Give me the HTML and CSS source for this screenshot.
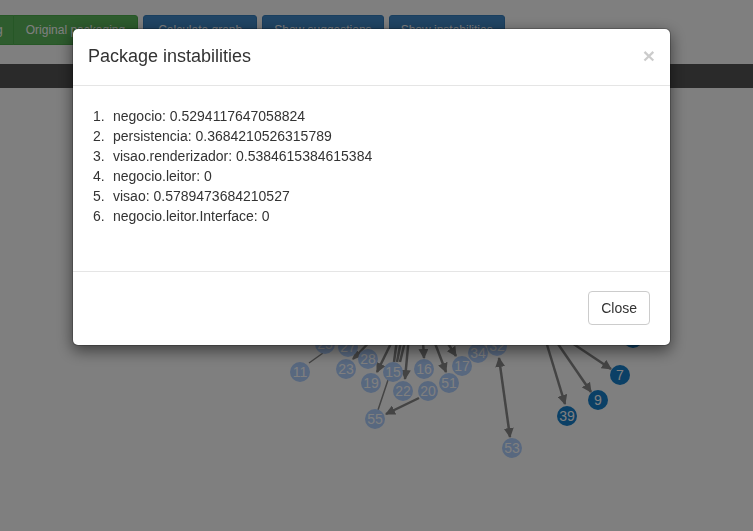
FILE: index.html
```html
<!DOCTYPE html>
<html lang="en">
<head>
    <meta charset="UTF-8">
    <meta name="viewport" content="width=device-width, initial-scale=1.0">
    <title>Package instabilities</title>
    <link rel="stylesheet" href="styles.css">
</head>
<body>

<div class="toolbar">
    <div class="btn-group">
        <button class="btn btn-success">Refactored packaging</button>
        <button class="btn btn-success">Original packaging</button>
    </div>
    <button class="btn btn-primary btn-wide">Calculate graph</button>
    <button class="btn btn-primary">Show suggestions</button>
    <button class="btn btn-primary">Show instabilities</button>
</div>

<div class="navbar"></div>

<svg class="graph" width="753" height="443" viewBox="0 88 753 443">
    <defs>
        <marker id="arrow" viewBox="0 0 10 10" refX="9" refY="5" markerWidth="4" markerHeight="4" orient="auto">
            <path d="M0,0 L10,5 L0,10 z" fill="#888"/>
        </marker>
        <marker id="arrow-start" viewBox="0 0 10 10" refX="1" refY="5" markerWidth="4" markerHeight="4" orient="auto">
            <path d="M10,0 L0,5 L10,10 z" fill="#888"/>
        </marker>
    </defs>
    <g class="links">
        <line x1="309" y1="363" x2="323" y2="353" class="thin"/>
        <line x1="386" y1="325" x2="353" y2="359" marker-end="url(#arrow)"/>
        <line x1="400" y1="325" x2="377" y2="372" marker-end="url(#arrow)"/>
        <line x1="399" y1="325" x2="394" y2="362"/>
        <line x1="404" y1="325" x2="397" y2="362"/>
        <line x1="409" y1="325" x2="400" y2="362"/>
        <line x1="410" y1="325" x2="405" y2="379" marker-end="url(#arrow)"/>
        <line x1="422" y1="325" x2="424" y2="358" marker-end="url(#arrow)"/>
        <line x1="428" y1="325" x2="446" y2="372" marker-end="url(#arrow)"/>
        <line x1="436" y1="325" x2="456" y2="356" marker-end="url(#arrow)"/>
        <line x1="499" y1="358" x2="510" y2="437" marker-start="url(#arrow-start)" marker-end="url(#arrow)"/>
        <line x1="419" y1="398" x2="386" y2="414" marker-end="url(#arrow)"/>
        <line x1="388" y1="380" x2="378" y2="410" class="thin"/>
        <line x1="541" y1="325" x2="565" y2="404" marker-end="url(#arrow)"/>
        <line x1="545" y1="325" x2="591" y2="392" marker-end="url(#arrow)"/>
        <line x1="545" y1="325" x2="611" y2="369" marker-end="url(#arrow)"/>
    </g>
    <g class="nodes">
        <g class="node"><circle cx="325" cy="344" r="10"/><text x="325" y="349">25</text></g>
        <g class="node"><circle cx="348" cy="347" r="10"/><text x="348" y="352">27</text></g>
        <g class="node"><circle cx="300" cy="372" r="10"/><text x="300" y="377">11</text></g>
        <g class="node"><circle cx="346" cy="369" r="10"/><text x="346" y="374">23</text></g>
        <g class="node"><circle cx="368" cy="359" r="10"/><text x="368" y="364">28</text></g>
        <g class="node"><circle cx="371" cy="383" r="10"/><text x="371" y="388">19</text></g>
        <g class="node"><circle cx="393" cy="372" r="10"/><text x="393" y="377">15</text></g>
        <g class="node"><circle cx="403" cy="391" r="10"/><text x="403" y="396">22</text></g>
        <g class="node"><circle cx="424" cy="369" r="10"/><text x="424" y="374">16</text></g>
        <g class="node"><circle cx="428" cy="391" r="10"/><text x="428" y="396">20</text></g>
        <g class="node"><circle cx="449" cy="383" r="10"/><text x="449" y="388">51</text></g>
        <g class="node"><circle cx="462" cy="366" r="10"/><text x="462" y="371">17</text></g>
        <g class="node"><circle cx="478" cy="353" r="10"/><text x="478" y="358">34</text></g>
        <g class="node"><circle cx="497" cy="346" r="10"/><text x="497" y="351">32</text></g>
        <g class="node"><circle cx="375" cy="419" r="10"/><text x="375" y="424">55</text></g>
        <g class="node"><circle cx="512" cy="448" r="10"/><text x="512" y="453">53</text></g>
        <g class="node dark"><circle cx="633" cy="338" r="10"/><text x="633" y="343">8</text></g>
        <g class="node dark"><circle cx="620" cy="375" r="10"/><text x="620" y="380">7</text></g>
        <g class="node dark"><circle cx="598" cy="400" r="10"/><text x="598" y="405">9</text></g>
        <g class="node dark"><circle cx="567" cy="416" r="10"/><text x="567" y="421">39</text></g>
    </g>
</svg>

<div class="modal-backdrop">
    <div class="modal-content">
        <div class="modal-header">
            <button class="close">&times;</button>
            <h4 class="modal-title">Package instabilities</h4>
        </div>
        <div class="modal-body">
            <ol class="instabilities">
                <li>negocio: 0.5294117647058824</li>
                <li>persistencia: 0.3684210526315789</li>
                <li>visao.renderizador: 0.5384615384615384</li>
                <li>negocio.leitor: 0</li>
                <li>visao: 0.5789473684210527</li>
                <li>negocio.leitor.Interface: 0</li>
            </ol>
        </div>
        <div class="modal-footer">
            <button class="btn btn-default">Close</button>
        </div>
    </div>
</div>

</body>
</html>
```

FILE: styles.css
```css
body {
    font-family: "Liberation Sans", Arial, sans-serif;
    font-size: 14px;
    color: #333;
    background: #fff;
    margin: 0;
    overflow: hidden;
}
.toolbar {
    display: flex;
    gap: 5px;
    padding-top: 15px;
    margin-left: -127px;
    height: 30px;
}
.btn-group {
    display: flex;
}
.btn-group .btn {
    padding: 5px 12px;
}
.btn-group .btn + .btn {
    margin-left: -1px;
}
.btn-group .btn:first-child {
    padding-right: 10px;
    border-radius: 3px 0 0 3px;
}
.btn-group .btn:last-child {
    border-radius: 0 3px 3px 0;
}
.btn {
    font-family: inherit;
    font-size: 12px;
    line-height: 18px;
    padding: 5px 11px;
    border: 1px solid transparent;
    border-radius: 3px;
    white-space: nowrap;
    cursor: pointer;
}
.btn-wide {
    padding: 5px 14px;
}
.btn-success {
    color: #fff;
    background-color: #5cb85c;
    border-color: #4cae4c;
}
.btn-primary {
    color: #fff;
    background-color: #428bca;
    border-color: #357ebd;
}
.btn-default {
    font-size: 14px;
    line-height: 20px;
    padding: 6px 12px;
    color: #333;
    background-color: #fff;
    border-color: #ccc;
    border-radius: 4px;
}
.navbar {
    margin-top: 19px;
    height: 24px;
    background: #555;
}
.graph {
    display: block;
}
.links line {
    stroke: #888;
    stroke-width: 2.5;
}
.links line.thin {
    stroke-width: 1.5;
}
.node circle {
    fill: #b0d0ff;
}
.node.dark circle {
    fill: #1680cc;
}
.node text {
    fill: #fff;
    font-size: 14px;
    text-anchor: middle;
}
.modal-backdrop {
    position: fixed;
    inset: 0;
    background: rgba(0, 0, 0, 0.5);
}
.modal-content {
    width: 597px;
    margin: 28px 0 0 72px;
    background: #fff;
    border: 1px solid rgba(0, 0, 0, 0.2);
    border-radius: 6px;
    box-shadow: 0 5px 15px rgba(0, 0, 0, 0.5);
    background-clip: padding-box;
}
.modal-header {
    padding: 15px;
    border-bottom: 1px solid #e5e5e5;
}
.modal-title {
    margin: 0;
    font-size: 18px;
    font-weight: normal;
    line-height: 1.428571;
}
.close {
    float: right;
    margin-top: 1px;
    padding: 0;
    border: 0;
    background: none;
    font-family: inherit;
    font-size: 21px;
    font-weight: bold;
    line-height: 1;
    color: #000;
    opacity: 0.2;
}
.modal-body {
    padding: 20px;
}
.instabilities {
    list-style: none;
    counter-reset: item;
    margin: 0 0 10px;
    padding: 0;
}
.instabilities li {
    counter-increment: item;
    line-height: 20px;
}
.instabilities li::before {
    content: counter(item) ".";
    display: inline-block;
    width: 20px;
}
.modal-footer {
    margin-top: 15px;
    padding: 19px 20px 20px;
    text-align: right;
    border-top: 1px solid #e5e5e5;
}
```
